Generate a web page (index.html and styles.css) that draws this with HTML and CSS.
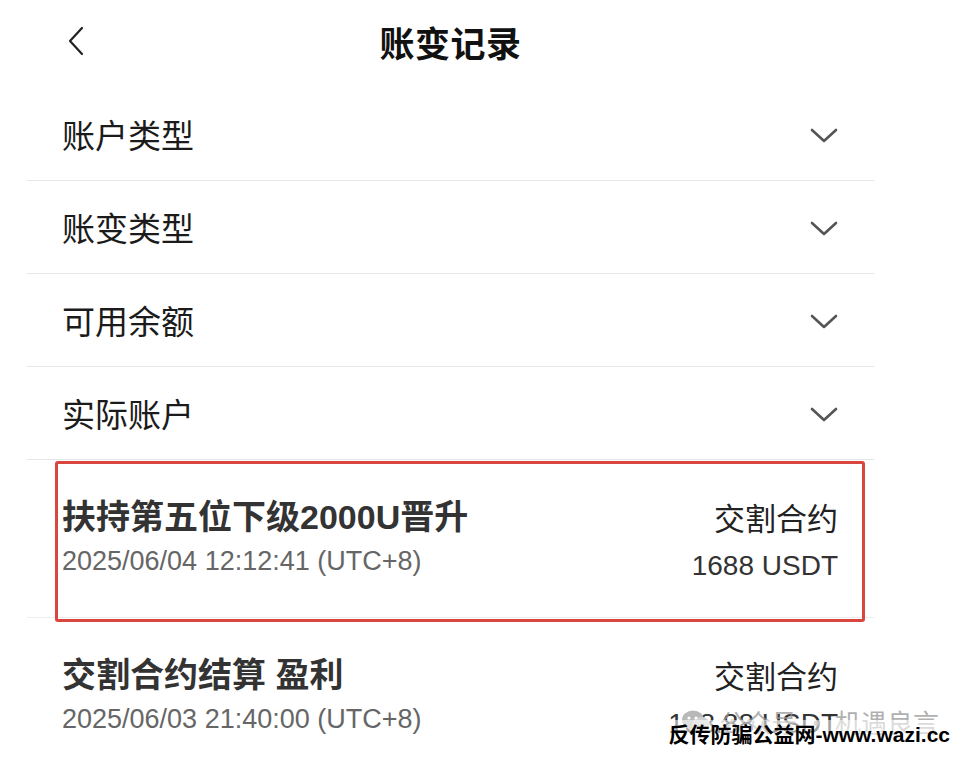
FILE: index.html
```html
<!DOCTYPE html>
<html lang="zh-CN">
<head>
<meta charset="utf-8">
<title>账变记录</title>
<link rel="stylesheet" href="styles.css">
</head>
<body>
<div class="page">
  <header class="header">
    <div class="back">
      <svg width="18" height="30" viewBox="0 0 18 30"><path d="M15 2 L3 15 L15 28" fill="none" stroke="#222" stroke-width="2.2" stroke-linecap="round" stroke-linejoin="round"/></svg>
    </div>
    <h1 class="title">账变记录</h1>
    <div class="spacer"></div>
  </header>

  <div class="filter-row"><span class="label">账户类型</span><svg class="chev" width="28" height="16" viewBox="0 0 28 16"><path d="M2 2 L14 13 L26 2" fill="none" stroke="#555" stroke-width="2.6" stroke-linecap="round" stroke-linejoin="round"/></svg></div>
  <div class="filter-row"><span class="label">账变类型</span><svg class="chev" width="28" height="16" viewBox="0 0 28 16"><path d="M2 2 L14 13 L26 2" fill="none" stroke="#555" stroke-width="2.6" stroke-linecap="round" stroke-linejoin="round"/></svg></div>
  <div class="filter-row"><span class="label">可用余额</span><svg class="chev" width="28" height="16" viewBox="0 0 28 16"><path d="M2 2 L14 13 L26 2" fill="none" stroke="#555" stroke-width="2.6" stroke-linecap="round" stroke-linejoin="round"/></svg></div>
  <div class="filter-row"><span class="label">实际账户</span><svg class="chev" width="28" height="16" viewBox="0 0 28 16"><path d="M2 2 L14 13 L26 2" fill="none" stroke="#555" stroke-width="2.6" stroke-linecap="round" stroke-linejoin="round"/></svg></div>

  <div class="tx highlight">
    <div class="tx-left">
      <div class="tx-title">扶持第五位下级2000U晋升</div>
      <div class="tx-date">2025/06/04 12:12:41 (UTC+8)</div>
    </div>
    <div class="tx-right">
      <div class="tx-type">交割合约</div>
      <div class="tx-amount">1688 USDT</div>
    </div>
  </div>

  <div class="tx">
    <div class="tx-left">
      <div class="tx-title">交割合约结算 盈利</div>
      <div class="tx-date">2025/06/03 21:40:00 (UTC+8)</div>
    </div>
    <div class="tx-right">
      <div class="tx-type">交割合约</div>
      <div class="tx-amount">168.88 USDT</div>
    </div>
  </div>
</div>

<div class="wm-gray">
  <svg width="30" height="26" viewBox="0 0 30 26"><ellipse cx="12" cy="11" rx="11" ry="9.5" fill="#b8b8b8"/><ellipse cx="20" cy="16" rx="9" ry="8" fill="#cfcfcf"/><circle cx="8" cy="9" r="1.6" fill="#fff"/><circle cx="15" cy="9" r="1.6" fill="#fff"/></svg>
  <span>公众号 · 机遇良言</span>
</div>
<div class="wm-black">反传防骗公益网-www.wazi.cc</div>
</body>
</html>
```

FILE: styles.css
```css
html, body {
  margin: 0;
  padding: 0;
  background: #ffffff;
  height: 762px;
  overflow: hidden;
}

body {
  position: relative;
  font-family: "Liberation Sans", "Noto Sans CJK SC", sans-serif;
  color: #1b1b1b;
}

.page {
  width: 847px;
  margin-left: 27px;
}

.header {
  box-sizing: border-box;
  height: 88px;
  padding-bottom: 6px;
  display: grid;
  grid-template-columns: 1fr auto 1fr;
  align-items: center;
}

.back {
  padding-left: 40px;
  display: flex;
  align-items: center;
}

.title {
  margin: 0;
  font-family: "Noto Sans CJK SC", sans-serif;
  font-size: 35px;
  font-weight: 700;
  line-height: 1;
  color: #111;
  letter-spacing: 0.5px;
}

.filter-row {
  height: 92px;
  border-bottom: 1px solid #e6e6e6;
  display: flex;
  align-items: center;
  justify-content: space-between;
  padding: 0 36px 0 35px;
}

.label {
  font-family: "Noto Sans CJK SC", sans-serif;
  font-size: 33px;
  line-height: 1;
  color: #1b1b1b;
}

.chev {
  display: block;
  margin-top: 3px;
}

.tx {
  position: relative;
  display: flex;
  justify-content: space-between;
  padding: 35px 36px 24px 35px;
  border-bottom: 1px solid #eeeeee;
}

.tx.highlight::after {
  content: "";
  position: absolute;
  left: 28px;
  right: 9px;
  top: 1px;
  bottom: -5px;
  border: 3px solid #d8463f;
  border-radius: 3px;
}

.tx-left, .tx-right {
  display: flex;
  flex-direction: column;
}

.tx-right {
  align-items: flex-end;
}

.tx-title {
  font-size: 34px;
  font-weight: 700;
  line-height: 44px;
  color: #333;
}

.tx-date {
  font-size: 27px;
  line-height: 44px;
  color: #666;
}

.tx-type {
  font-family: "Noto Sans CJK SC", sans-serif;
  font-size: 31px;
  line-height: 44px;
  color: #222;
}

.tx-amount {
  font-size: 28px;
  line-height: 54px;
  color: #333;
}

.wm-gray {
  position: absolute;
  right: 27px;
  top: 706px;
  display: flex;
  align-items: center;
  gap: 8px;
  font-family: "Noto Sans CJK SC", sans-serif;
  font-size: 26px;
  line-height: 32px;
  color: rgba(150, 150, 150, 0.75);
}

.wm-black {
  position: absolute;
  right: 16px;
  top: 720px;
  font-family: "Liberation Sans", "Noto Sans CJK SC", sans-serif;
  font-size: 21px;
  font-weight: 700;
  line-height: 30px;
  color: #000;
  background: rgba(255, 255, 255, 0.55);
}
```
